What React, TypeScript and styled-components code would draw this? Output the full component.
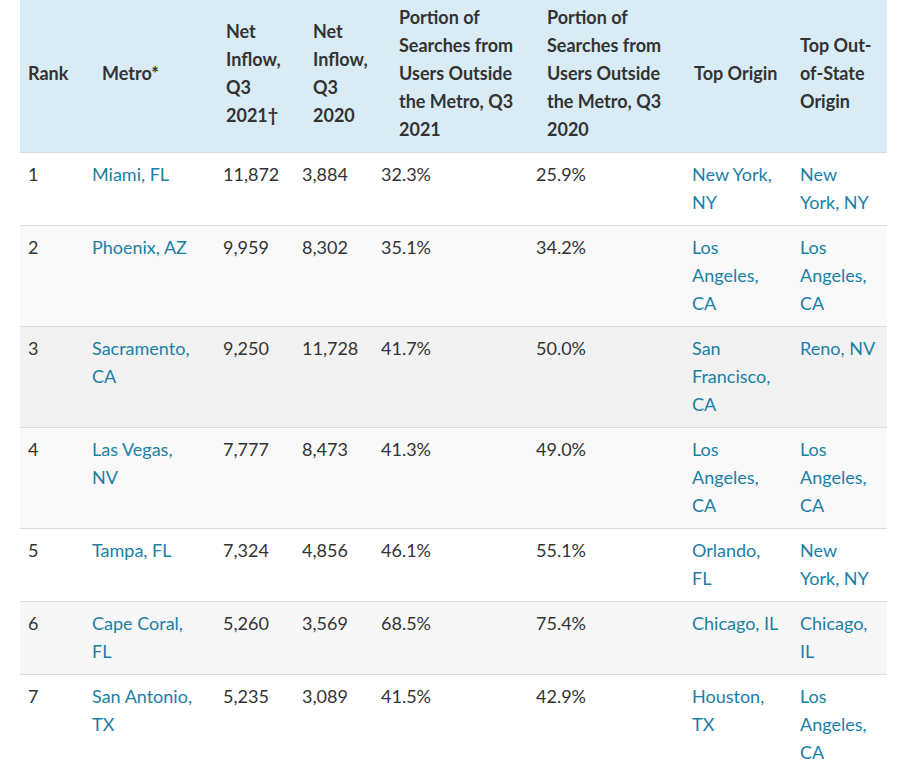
import styled, { createGlobalStyle } from "styled-components";

const GlobalStyle = createGlobalStyle`
  html, body {
    margin: 0;
    padding: 0;
    background: #ffffff;
  }
  body {
    font-family: Lato, "Liberation Sans", sans-serif;
    color: #333333;
  }
`;

const Wrapper = styled.div`
  padding: 0 20px;
`;

const Table = styled.table`
  width: 867px;
  table-layout: fixed;
  border-collapse: collapse;
  font-size: 18px;
  line-height: 28px;
`;

const HeadRow = styled.tr`
  background-color: #d9ecf6;
  border-bottom: 1px solid #dcdcdc;
`;

const Th = styled.th<{ $indent: number }>`
  text-align: left;
  vertical-align: middle;
  font-weight: 700;
  color: #333333;
  white-space: pre-line;
  padding: 3px 0 9px ${(props) => props.$indent}px;
`;

const Row = styled.tr<{ $bg: string }>`
  background-color: ${(props) => props.$bg};
  border-bottom: 1px solid #dcdcdc;
`;

const Td = styled.td`
  vertical-align: top;
  padding: 7px 4px 9px 8px;
  white-space: pre-line;
`;

const Place = styled.a`
  color: #1a80a6;
  text-decoration: none;
  cursor: pointer;
`;

interface IColumn {
  label: string;
  width: number;
  indent: number;
}

const columns: IColumn[] = [
  { label: "Rank", width: 64, indent: 8 },
  { label: "Metro*", width: 131, indent: 18 },
  { label: "Net\nInflow,\nQ3\n2021†", width: 79, indent: 11 },
  { label: "Net\nInflow,\nQ3\n2020", width: 79, indent: 19 },
  {
    label: "Portion of\nSearches from\nUsers Outside\nthe Metro, Q3\n2021",
    width: 155,
    indent: 26,
  },
  {
    label: "Portion of\nSearches from\nUsers Outside\nthe Metro, Q3\n2020",
    width: 156,
    indent: 19,
  },
  { label: "Top Origin", width: 108, indent: 10 },
  { label: "Top Out-\nof-State\nOrigin", width: 95, indent: 8 },
];

interface IMetro {
  rank: number;
  metro: string;
  net21: string;
  net20: string;
  share21: string;
  share20: string;
  origin: string;
  outOfState: string;
  bg: string;
}

const metros: IMetro[] = [
  {
    rank: 1,
    metro: "Miami, FL",
    net21: "11,872",
    net20: "3,884",
    share21: "32.3%",
    share20: "25.9%",
    origin: "New York,\nNY",
    outOfState: "New\nYork, NY",
    bg: "#ffffff",
  },
  {
    rank: 2,
    metro: "Phoenix, AZ",
    net21: "9,959",
    net20: "8,302",
    share21: "35.1%",
    share20: "34.2%",
    origin: "Los\nAngeles,\nCA",
    outOfState: "Los\nAngeles,\nCA",
    bg: "#f9f9f9",
  },
  {
    rank: 3,
    metro: "Sacramento,\nCA",
    net21: "9,250",
    net20: "11,728",
    share21: "41.7%",
    share20: "50.0%",
    origin: "San\nFrancisco,\nCA",
    outOfState: "Reno, NV",
    bg: "#f2f2f2",
  },
  {
    rank: 4,
    metro: "Las Vegas,\nNV",
    net21: "7,777",
    net20: "8,473",
    share21: "41.3%",
    share20: "49.0%",
    origin: "Los\nAngeles,\nCA",
    outOfState: "Los\nAngeles,\nCA",
    bg: "#f9f9f9",
  },
  {
    rank: 5,
    metro: "Tampa, FL",
    net21: "7,324",
    net20: "4,856",
    share21: "46.1%",
    share20: "55.1%",
    origin: "Orlando,\nFL",
    outOfState: "New\nYork, NY",
    bg: "#ffffff",
  },
  {
    rank: 6,
    metro: "Cape Coral,\nFL",
    net21: "5,260",
    net20: "3,569",
    share21: "68.5%",
    share20: "75.4%",
    origin: "Chicago, IL",
    outOfState: "Chicago,\nIL",
    bg: "#f7f7f7",
  },
  {
    rank: 7,
    metro: "San Antonio,\nTX",
    net21: "5,235",
    net20: "3,089",
    share21: "41.5%",
    share20: "42.9%",
    origin: "Houston,\nTX",
    outOfState: "Los\nAngeles,\nCA",
    bg: "#ffffff",
  },
];

const App = () => {
  return (
    <Wrapper>
      <GlobalStyle />
      <Table>
        <colgroup>
          {columns.map((col) => (
            <col key={col.label} style={{ width: col.width }} />
          ))}
        </colgroup>
        <thead>
          <HeadRow>
            {columns.map((col) => (
              <Th key={col.label} $indent={col.indent}>
                {col.label}
              </Th>
            ))}
          </HeadRow>
        </thead>
        <tbody>
          {metros.map((m) => (
            <Row key={m.rank} $bg={m.bg}>
              <Td>{m.rank}</Td>
              <Td>
                <Place>{m.metro}</Place>
              </Td>
              <Td>{m.net21}</Td>
              <Td>{m.net20}</Td>
              <Td>{m.share21}</Td>
              <Td>{m.share20}</Td>
              <Td>
                <Place>{m.origin}</Place>
              </Td>
              <Td>
                <Place>{m.outOfState}</Place>
              </Td>
            </Row>
          ))}
        </tbody>
      </Table>
    </Wrapper>
  );
};

export default App;
